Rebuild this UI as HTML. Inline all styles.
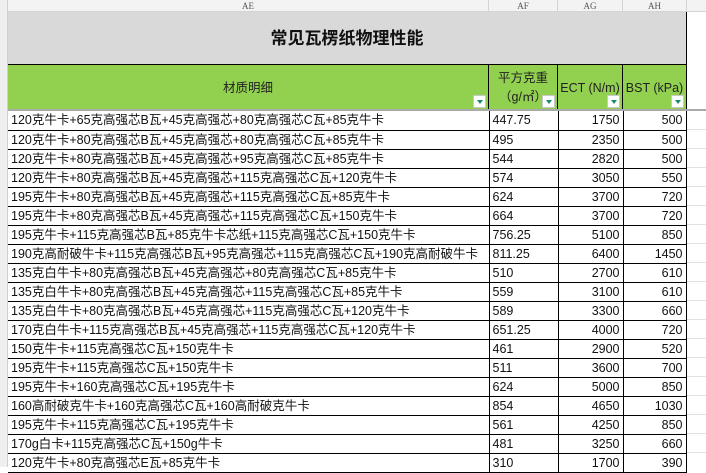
<!DOCTYPE html><html><head><meta charset="utf-8"><style>
*{margin:0;padding:0;box-sizing:border-box}
body{width:706px;height:467px;overflow:hidden;background:#fff;font-family:"Liberation Sans","Noto Sans CJK SC",sans-serif;position:relative}
.colh{position:absolute;top:0;height:12px;background:#f3f3f3;border-right:1px solid #d4d4d4;border-bottom:1px solid #d4d4d4;font:9px "Liberation Serif",serif;color:#555;text-align:center;line-height:12px}
.gut{position:absolute;left:0;top:0;width:8px;height:467px;background:#efefef;border-right:1px solid #cfcfcf}
.title{position:absolute;left:8px;top:12px;width:679px;height:52px;background:#d9d9d9;border-right:1px solid #000;font-weight:bold;font-size:17px;text-align:center;line-height:54px;color:#111}
.hd{position:absolute;top:64px;height:46px;background:#92d050;border-right:1px solid #000;border-top:1px solid #000;font-size:12.5px;color:#222;text-align:center}
.fb{position:absolute;right:2px;bottom:2px;width:13px;height:13px;background:#fff;border:1px solid #c8c8c8}
.fb:after{content:"";position:absolute;left:3px;top:4px;border-left:3px solid transparent;border-right:3px solid transparent;border-top:4px solid #1e8a6e}
.sep{position:absolute;left:8px;top:109px;width:698px;height:2px;background:#aaa}
table{position:absolute;left:8px;top:111px;border-collapse:collapse;font-size:12.5px;color:#111}
td{height:19px;border-bottom:1px solid #000;border-right:1px solid #000;padding:0 3px;white-space:nowrap;overflow:hidden;line-height:18px}
td:nth-child(1){width:481px}td:nth-child(2){width:69px}td:nth-child(3){width:65px;text-align:right}td:nth-child(4){width:63px;text-align:right}
.gr{position:absolute;left:687px;top:12px;width:19px;height:455px;background:repeating-linear-gradient(#fff 0 18px,#e2e2e2 18px 19px)}
</style></head><body>
<div class="gut"></div>
<div class="colh" style="left:8px;width:481px">AE</div>
<div class="colh" style="left:489px;width:69px">AF</div>
<div class="colh" style="left:558px;width:65px">AG</div>
<div class="colh" style="left:623px;width:64px">AH</div>
<div class="colh" style="left:687px;width:19px;border-right:none"></div>
<div class="title">常见瓦楞纸物理性能</div>
<div class="hd" style="left:8px;width:481px;line-height:46px">材质明细<div class="fb"></div></div>
<div class="hd" style="left:489px;width:69px;line-height:19px;padding-top:4px">平方克重<br>（g/㎡）<div class="fb"></div></div>
<div class="hd" style="left:558px;width:65px;line-height:46px">ECT (N/m)<div class="fb"></div></div>
<div class="hd" style="left:623px;width:64px;line-height:46px">BST (kPa)<div class="fb"></div></div>
<div class="sep"></div>
<div class="gr" style="top:111px;height:356px"></div>
<table>
<tr><td>120克牛卡+65克高强芯B瓦+45克高强芯+80克高强芯C瓦+85克牛卡</td><td>447.75</td><td>1750</td><td>500</td></tr>
<tr><td>120克牛卡+80克高强芯B瓦+45克高强芯+80克高强芯C瓦+85克牛卡</td><td>495</td><td>2350</td><td>500</td></tr>
<tr><td>120克牛卡+80克高强芯B瓦+45克高强芯+95克高强芯C瓦+85克牛卡</td><td>544</td><td>2820</td><td>500</td></tr>
<tr><td>120克牛卡+80克高强芯B瓦+45克高强芯+115克高强芯C瓦+120克牛卡</td><td>574</td><td>3050</td><td>550</td></tr>
<tr><td>195克牛卡+80克高强芯B瓦+45克高强芯+115克高强芯C瓦+85克牛卡</td><td>624</td><td>3700</td><td>720</td></tr>
<tr><td>195克牛卡+80克高强芯B瓦+45克高强芯+115克高强芯C瓦+150克牛卡</td><td>664</td><td>3700</td><td>720</td></tr>
<tr><td>195克牛卡+115克高强芯B瓦+85克牛卡芯纸+115克高强芯C瓦+150克牛卡</td><td>756.25</td><td>5100</td><td>850</td></tr>
<tr><td>190克高耐破牛卡+115克高强芯B瓦+95克高强芯+115克高强芯C瓦+190克高耐破牛卡</td><td>811.25</td><td>6400</td><td>1450</td></tr>
<tr><td>135克白牛卡+80克高强芯B瓦+45克高强芯+80克高强芯C瓦+85克牛卡</td><td>510</td><td>2700</td><td>610</td></tr>
<tr><td>135克白牛卡+80克高强芯B瓦+45克高强芯+115克高强芯C瓦+85克牛卡</td><td>559</td><td>3100</td><td>610</td></tr>
<tr><td>135克白牛卡+80克高强芯B瓦+45克高强芯+115克高强芯C瓦+120克牛卡</td><td>589</td><td>3300</td><td>660</td></tr>
<tr><td>170克白牛卡+115克高强芯B瓦+45克高强芯+115克高强芯C瓦+120克牛卡</td><td>651.25</td><td>4000</td><td>720</td></tr>
<tr><td>150克牛卡+115克高强芯C瓦+150克牛卡</td><td>461</td><td>2900</td><td>520</td></tr>
<tr><td>195克牛卡+115克高强芯C瓦+150克牛卡</td><td>511</td><td>3600</td><td>700</td></tr>
<tr><td>195克牛卡+160克高强芯C瓦+195克牛卡</td><td>624</td><td>5000</td><td>850</td></tr>
<tr><td>160高耐破克牛卡+160克高强芯C瓦+160高耐破克牛卡</td><td>854</td><td>4650</td><td>1030</td></tr>
<tr><td>195克牛卡+115克高强芯C瓦+195克牛卡</td><td>561</td><td>4250</td><td>850</td></tr>
<tr><td>170g白卡+115克高强芯C瓦+150g牛卡</td><td>481</td><td>3250</td><td>660</td></tr>
<tr><td>120克牛卡+80克高强芯E瓦+85克牛卡</td><td>310</td><td>1700</td><td>390</td></tr>
</table>
</body></html>
